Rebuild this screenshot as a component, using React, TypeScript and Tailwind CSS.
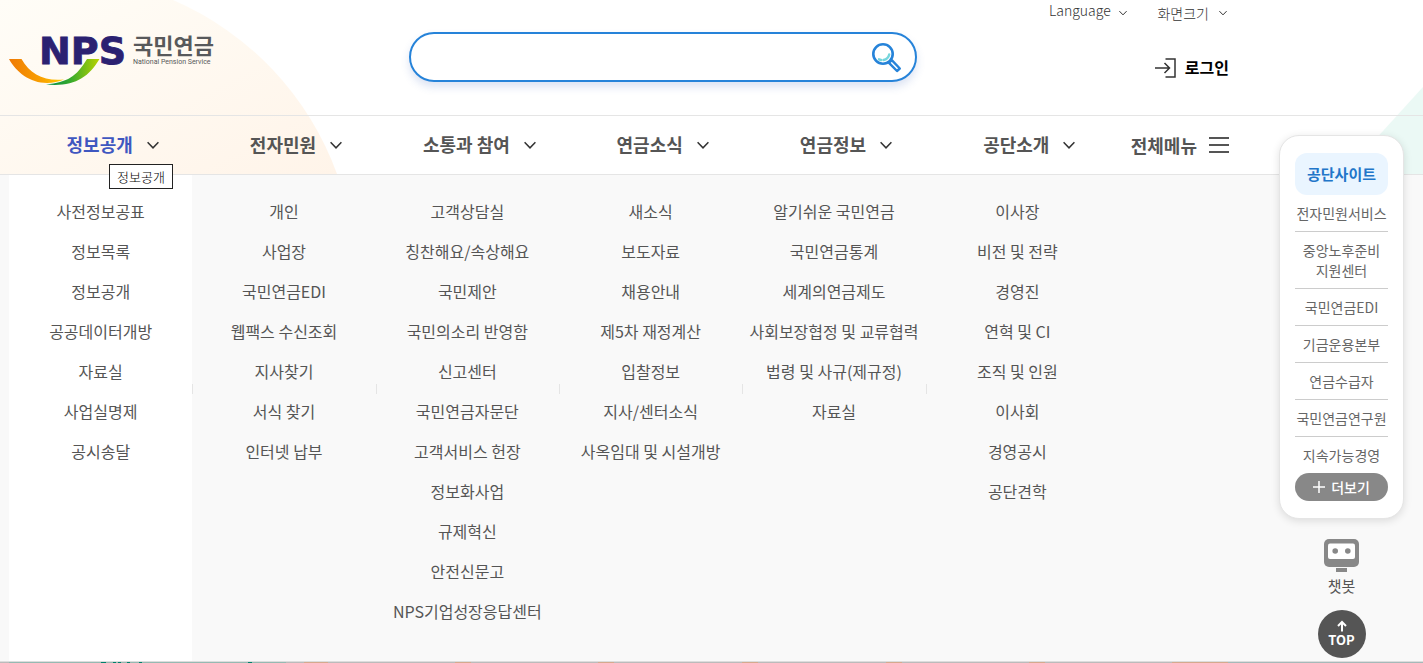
import React from "react";

type Column = { title: string; items: string[] };

const columns: Column[] = [
  { title: "정보공개", items: ["사전정보공표", "정보목록", "정보공개", "공공데이터개방", "자료실", "사업실명제", "공시송달"] },
  { title: "전자민원", items: ["개인", "사업장", "국민연금EDI", "웹팩스 수신조회", "지사찾기", "서식 찾기", "인터넷 납부"] },
  {
    title: "소통과 참여",
    items: ["고객상담실", "칭찬해요/속상해요", "국민제안", "국민의소리 반영함", "신고센터", "국민연금자문단", "고객서비스 헌장", "정보화사업", "규제혁신", "안전신문고", "NPS기업성장응답센터"],
  },
  { title: "연금소식", items: ["새소식", "보도자료", "채용안내", "제5차 재정계산", "입찰정보", "지사/센터소식", "사옥임대 및 시설개방"] },
  { title: "연금정보", items: ["알기쉬운 국민연금", "국민연금통계", "세계의연금제도", "사회보장협정 및 교류협력", "법령 및 사규(제규정)", "자료실"] },
  { title: "공단소개", items: ["이사장", "비전 및 전략", "경영진", "연혁 및 CI", "조직 및 인원", "이사회", "경영공시", "공단견학"] },
];

const sites = ["전자민원서비스", "중앙노후준비 지원센터", "국민연금EDI", "기금운용본부", "연금수급자", "국민연금연구원", "지속가능경영"];

function Chevron({ className }: { className: string }) {
  return (
    <svg viewBox="0 0 12 8" className={className} fill="none" stroke="currentColor" strokeWidth="1.5" aria-hidden="true">
      <path d="M0.6 1.2 6 6.8 11.4 1.2" />
    </svg>
  );
}

function Logo() {
  return (
    <svg viewBox="0 -10 212 64" className="h-16 w-[212px] overflow-visible" role="img" aria-label="NPS 국민연금">
      <defs>
        <linearGradient id="orange" x1="0" x2="1">
          <stop offset="0" stopColor="#ef7a05" />
          <stop offset="0.6" stopColor="#f9a100" />
          <stop offset="1" stopColor="#ffd000" />
        </linearGradient>
        <linearGradient id="green" x1="0" x2="1">
          <stop offset="0" stopColor="#008a4b" />
          <stop offset="0.45" stopColor="#35a92d" />
          <stop offset="1" stopColor="#b9d300" />
        </linearGradient>
      </defs>
      <text x="30" y="31" fontSize="38" fontWeight="700" fill="#2b2171" stroke="#2b2171" strokeWidth="0.8" fontFamily="DejaVu Sans, sans-serif">NPS</text>
      <path d="M0 26H12.500C21 41 35 48.500 55 46.500C50 48.500 44 50 38 50C21 50 7 39 0 26Z" fill="url(#orange)" />
      <path d="M78 26H90.500C79 45 65 54 37 51.500C59 49 67 44 78 26Z" fill="url(#green)" />
      <text x="124" y="21" fontSize="22" fontWeight="700" fill="#58595b" fontFamily="Noto Sans CJK KR, sans-serif">국민연금</text>
      <text x="124" y="31" fontSize="7" fill="#58595b" fontFamily="Roboto, sans-serif">National Pension Service</text>
    </svg>
  );
}

function SearchIcon() {
  return (
    <svg viewBox="0 0 30 30" className="h-[30px] w-[30px]" fill="none" aria-hidden="true">
      <circle cx="11" cy="11" r="9.700" stroke="#2683d9" strokeWidth="2.600" />
      <path d="M17.200 11.500A7 7 0 0 1 11.500 17M9 17 7 16.300" stroke="#76d6dc" strokeWidth="2.400" strokeLinecap="round" />
      <path d="M17 19.800 19.800 17.200 27.800 25.500 25 28Z" stroke="#2683d9" strokeWidth="2.400" strokeLinejoin="round" />
    </svg>
  );
}

function Header() {
  return (
    <div className="flex h-[115px] w-full max-w-[1220px]">
      <a href="#" className="mt-[23px] shrink-0 self-start"><Logo /></a>
      <form className="mt-8 ml-[188px] flex h-[50px] w-[508px] items-center self-start rounded-full border-2 border-[#2683d9] bg-white pr-[13px] shadow-[0_5px_8px_rgba(60,100,190,0.18)]">
        <input type="search" aria-label="검색어" className="h-full min-w-0 flex-1 rounded-full bg-transparent px-6 outline-none" />
        <button type="button" aria-label="검색" className="pt-[2px]"><SearchIcon /></button>
      </form>
      <div className="ml-auto flex w-[180px] flex-col items-end text-[14px] font-light text-[#333]">
        <div className="flex w-full justify-between">
          <button type="button" className="flex h-5 items-center gap-2 whitespace-nowrap">Language<Chevron className="mt-[5px] h-[6px] w-2" /></button>
          <button type="button" className="mt-[3px] mr-[2px] flex h-5 items-center gap-[10px] whitespace-nowrap">화면크기<Chevron className="h-[6px] w-2" /></button>
        </div>
        <a href="#" className="mt-8 flex h-6 items-center gap-2 text-[16px] font-bold text-black">
          <svg viewBox="0 0 22 20" className="mt-px h-5 w-[22px]" fill="none" stroke="#333" strokeWidth="1.500" aria-hidden="true">
            <path d="M10.500 1H20V19H10.500M0 10H14.500M9.500 5 14.500 10 9.500 15" />
          </svg>
          로그인
        </a>
      </div>
    </div>
  );
}

function Sidebar() {
  return (
    <aside className="absolute top-[135px] right-[19px] z-10 flex w-[125px] flex-col items-center">
      <div className="w-full rounded-[20px] border border-[#e5e5e5] bg-white px-[15px] py-[17px] text-center shadow-[0_2px_8px_rgba(0,0,0,0.12)]">
        <h2 className="rounded-xl bg-[#eaf5ff] text-[15px] leading-[42px] font-bold text-[#2276c9]">공단사이트</h2>
        <ul className="text-[14px] leading-5 text-[#666]">
          {sites.map((s) => (
            <li key={s} className="border-b border-[#ccc] py-2 break-keep last:border-0"><a href="#">{s}</a></li>
          ))}
        </ul>
        <button type="button" className="flex h-7 w-full items-center justify-center gap-[6px] rounded-full bg-[#888] text-[14px] font-medium text-white">
          <svg viewBox="0 0 12 12" className="h-3 w-3" stroke="currentColor" strokeWidth="1.500" aria-hidden="true"><path d="M6 0V12M0 6H12" /></svg>
          더보기
        </button>
      </div>
      <a href="#" className="mt-5 flex flex-col items-center text-[15px] leading-[26px] text-[#555]">
        <svg viewBox="0 0 35 34" className="h-[34px] w-[35px]" aria-hidden="true">
          <rect width="35" height="28" rx="5" fill="#888" />
          <rect x="4" y="4.500" width="27" height="15.500" rx="2" fill="#fff" />
          <circle cx="11.200" cy="12" r="2.800" fill="#888" />
          <circle cx="23.800" cy="12" r="2.800" fill="#888" />
          <rect x="12" y="29" width="11" height="4" fill="#888" />
        </svg>
        챗봇
      </a>
      <a href="#" className="mt-[11px] flex h-12 w-12 flex-col items-center justify-center rounded-full bg-[#555] pb-px text-[13px] leading-4 font-bold text-white">
        <svg viewBox="0 0 10 12" className="h-3 w-[10px]" fill="none" stroke="currentColor" strokeWidth="2" aria-hidden="true"><path d="M5 11.500V2M1 6 5 2 9 6" /></svg>
        TOP
      </a>
    </aside>
  );
}

export default function App() {
  return (
    <div className="relative overflow-hidden bg-white font-['Noto_Sans_CJK_KR','Noto_Sans',sans-serif] text-[#555]">
      <header className="relative">
        <svg className="absolute top-0 left-0 h-[174px] w-[340px]" viewBox="0 0 340 174" aria-hidden="true">
          <defs>
            <linearGradient id="glow" x1="0" y1="0" x2="1" y2="1">
              <stop offset="0" stopColor="#fffdf7" />
              <stop offset="1" stopColor="#fff4e9" />
            </linearGradient>
          </defs>
          <path d="M0 0H173A301 301 0 0 1 337 174H0Z" fill="url(#glow)" />
        </svg>
        <svg className="absolute right-0 bottom-0 h-[88px] w-20" viewBox="0 0 80 88" aria-hidden="true">
          <path d="M80 0V88H0Z" fill="#ebf9f5" />
        </svg>
        <div className="relative border-b border-[#e5e5e5] pl-[9px]"><Header /></div>
        <nav className="relative border-b border-[#e5e5e5] pl-[9px]">
          <div className="flex h-[58px] max-w-[1220px] items-center text-[18px] font-bold">
            <ul className="grid flex-1 grid-cols-6">
              {columns.map((c, i) => (
                <li key={c.title} className="relative flex justify-center pl-[26px]">
                  <a href="#" className={i === 0 ? "flex items-center gap-[14px] pr-[2px] pb-[2px] text-[#3f57c0]" : "flex items-center gap-[14px] pr-[2px] pb-[2px]"}>
                    {c.title}
                    <Chevron className="mt-[2px] h-2 w-3 text-[#333]" />
                  </a>
                  {i === 0 && (
                    <span role="tooltip" className="absolute top-[33px] left-[100px] z-20 border border-[#222] bg-white px-[7px] text-[13px] leading-[23px] font-light whitespace-nowrap text-black">정보공개</span>
                  )}
                </li>
              ))}
            </ul>
            <button type="button" className="flex w-[120px] items-center justify-end gap-3 whitespace-nowrap">
              전체메뉴
              <svg viewBox="0 0 20 18" className="h-[18px] w-5" stroke="#555" strokeWidth="2" aria-hidden="true"><path d="M0 2H20M0 9H20M0 16H20" /></svg>
            </button>
          </div>
        </nav>
      </header>

      <div className="border-b border-[#ddd] bg-[#f9f9f9] pl-[9px]">
        <div className="max-w-[1220px] pr-[120px]">
          <div className="grid grid-cols-6">
            {columns.map((c, i) => (
              <ul key={c.title} className={i === 0 ? "relative bg-white pt-4 pb-[30px] text-center" : "relative pt-4 pb-[30px] text-center"}>
                {c.items.map((t) => (
                  <li key={t} className="text-[16px] leading-10 whitespace-nowrap"><a href="#">{t}</a></li>
                ))}
                {i < 5 && <li aria-hidden="true" className="absolute top-[209px] -right-px h-[10px] w-px bg-[#e5e5e5]" />}
              </ul>
            ))}
          </div>
        </div>
      </div>

      <div className="flex h-px bg-[#bbb] pl-[9px]" aria-hidden="true">
        <div className="flex w-[277px] bg-[#96b9b2] pl-[92px]">
          <span className="w-[5px] bg-[#00806b]" />
          <span className="ml-[7px] w-[3px] bg-[#00806b]" />
          <span className="ml-[2px] w-[3px] bg-[#00806b]" />
          <span className="ml-[6px] w-[3px] bg-[#00806b]" />
          <span className="ml-[9px] w-[3px] bg-[#00806b]" />
          <span className="ml-[106px] w-[4px] bg-[#00806b]" />
        </div>
        <div className="ml-[18px] w-6 bg-[#d5a98d]" />
        <div className="ml-[127px] w-4 bg-[#d5a98d]" />
        <div className="ml-[127px] w-4 bg-[#d5a98d]" />
        <div className="ml-[128px] w-4 bg-[#d5a98d]" />
        <div className="ml-[128px] w-4 bg-[#d5a98d]" />
        <div className="ml-[127px] w-4 bg-[#d5a98d]" />
        <div className="ml-[127px] w-14 bg-[#d5a98d]" />
        <div className="flex-1 bg-[#a5b9b9]" />
      </div>
      <Sidebar />
    </div>
  );
}
